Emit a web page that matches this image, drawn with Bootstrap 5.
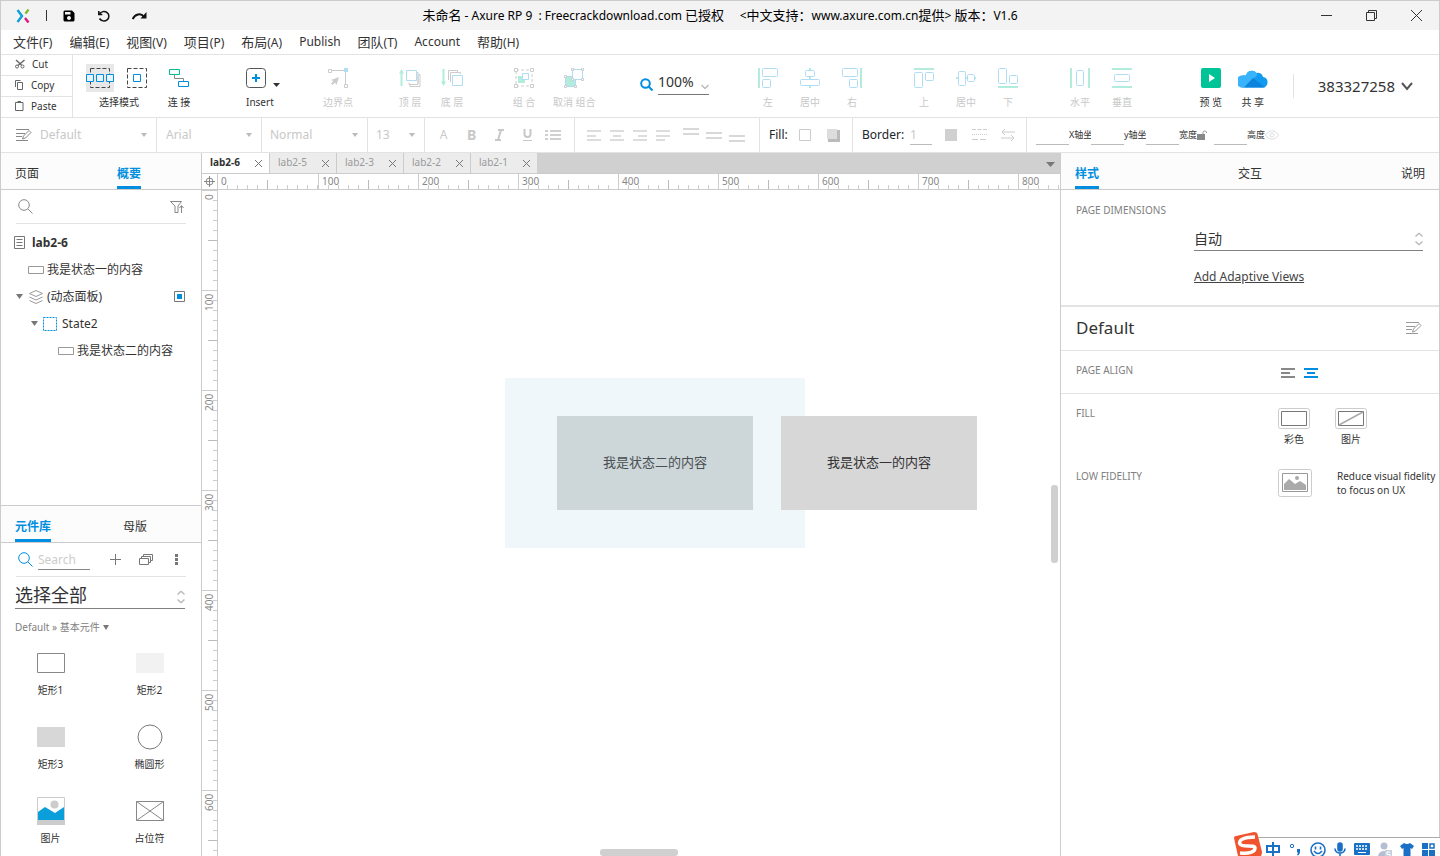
<!DOCTYPE html>
<html lang="zh-CN">
<head>
<meta charset="utf-8">
<meta name="viewport" content="width=device-width, initial-scale=1">
<title>未命名 - Axure RP 9</title>
<link href="https://cdn.jsdelivr.net/npm/bootstrap@5.3.0/dist/css/bootstrap.min.css" rel="stylesheet">
<style>
:root{--line:#e3e3e3;--edge:#ccc;--ink:#333;--blue:#008fe0;--sky:#b0dcf5;--mint:#b3ecdc}
body{font-family:"Noto Sans","Noto Sans CJK SC",sans-serif;font-size:12px;line-height:16px;color:var(--ink);fill:none}
button,input,select{font:inherit;color:inherit}
button{background:none;border:0;padding:0}
svg{display:block;flex:none}
.app{border:1px solid var(--edge);border-bottom:0}
.title-bar{background:#f3f3f3;height:29px;color:#000}
.title-text{white-space:pre;padding-bottom:2px}
.han{font-size:13px}
.menu-bar{height:25px;border-bottom:1px solid var(--line)}
.menu-bar a{color:var(--ink);text-decoration:none}
.tool-bar{height:63px;border-bottom:1px solid var(--line)}
.clip-col{width:72px;border-right:1px solid var(--line);font-size:10px}
.clip-col button{border-bottom:1px solid var(--line);padding-left:14px;padding-bottom:2px}
.clip-col svg{margin-right:7px}
.clip-col button:last-child{border:0}
.tool{width:42px;font-size:10px;line-height:14px;white-space:nowrap;flex:none}
.tool-art{height:28px;margin-bottom:3px}
.dim{color:#c8c8c8}
.group{margin-left:30px}
.format-bar{height:35px;border-bottom:1px solid var(--line);display:grid;grid-template-columns:156px 105px 106px 57px 150px 185px 93px 174px 1fr;color:#c8c8c8}
.format-bar>*{border-right:1px solid var(--line);display:flex;align-items:center;position:relative;min-width:0}
.format-bar>*:last-child{border:0}
.flat-select{appearance:none;background:none;border:0;outline:0;width:100%;padding:0 8px}
.line-input{border:0;border-bottom:1px solid #bbb;background:none;outline:0;padding:0;width:33px;height:20px;border-radius:0}
.tiny{font-size:9px;color:var(--ink);white-space:nowrap;width:22px;overflow:hidden}
.side-left{width:201px;border-right:1px solid var(--edge)}
.side-right{width:379px;border-left:1px solid var(--edge)}
.tabs{height:37px;background:#fcfcfc;border-bottom:1px solid var(--edge)}
.tabs button{border-bottom:3px solid transparent;padding-top:8px}
.tabs .on{color:var(--blue);font-weight:700;border-color:var(--blue)}
.rule{margin:0 15px;border-bottom:1px solid var(--line)}
.tree button{height:27px;width:100%;display:flex;align-items:center}
.big-select{font-size:18px;line-height:24px;height:32px;border-bottom:1px solid #808080}
.shape{height:74px;font-size:10px;padding-top:4px}
.shape:nth-last-child(-n+2){height:63px}
.shape-art{height:28px;margin-bottom:5px}
.doc-tabs{height:21px;background:#d0d0d0;border-bottom:1px solid var(--edge);font-size:10px}
.doc-tab{width:67px;background:#ececec;border-right:1px solid var(--edge);color:#999;padding:0 7px 0 8px}
.doc-tab span{padding-bottom:2px}
.doc-tab.on{width:68px;background:#fff;color:var(--ink);font-weight:700}
.doc-tab:nth-child(5){width:66px;border:0}
.ruler-top{height:16px;border-bottom:1px solid var(--edge)}
.corner{width:16px;border-right:1px solid var(--edge)}
.ruler-side{width:16px;border-right:1px solid var(--edge)}
.mark-x,.mark-y{flex:none;font-size:10px;line-height:14px;color:#888}
.mark-x{width:100px;padding-left:3px;border-left:1px solid var(--edge);background:linear-gradient(#bbb,#bbb) 49px 100%/1px 9px no-repeat,repeating-linear-gradient(90deg,transparent 0 9px,#ccc 9px 10px) 0 100%/100% 4px no-repeat}
.mark-y{height:100px;padding-bottom:3px;writing-mode:vertical-rl;transform:rotate(180deg);display:flex;justify-content:flex-end;border-bottom:1px solid var(--edge);background:linear-gradient(#bbb,#bbb) 0 49px/9px 1px no-repeat,repeating-linear-gradient(0deg,transparent 0 9px,#ccc 9px 10px) 0 0/4px 100% no-repeat}
.stage div{position:absolute;display:flex;align-items:center;justify-content:center;font-size:13px;padding-bottom:2px}
.node-panel{left:287px;top:188px;width:300px;height:170px;background:#eff7fa}
.node-two{left:339px;top:226px;width:196px;height:94px;background:#cdd6d9;color:#4a5052}
.node-one{left:563px;top:226px;width:196px;height:94px;background:#d7d7d7}
.thumb-y{width:7px;height:78px;right:2px;top:295px;background:#d0d0d0;border-radius:3px}
.thumb-x{width:78px;height:7px;left:382px;bottom:0;background:#d0d0d0;border-radius:3px}
.cap{font-size:10px;color:#808080;width:202px;flex:none}
.size-box{margin-left:118px;margin-right:1px}
.ime{width:206px;height:24px}
.ime-line{border-top:1px solid #aaa;background:#fff;margin-top:5px;height:19px;padding-top:4px}
</style>
</head>
<body>
<div class="app d-flex flex-column vh-100 overflow-hidden bg-white">

<header class="title-bar d-flex align-items-center flex-shrink-0 position-relative">
  <div class="d-flex align-items-center" style="padding-left:15px">
    <svg width="14" height="14" viewBox="0 0 14 14" stroke-width="2.4"><path d="M1.500 1l4.500 6-4.500 6" stroke="#0e9fd8"/><path d="M12.500 .6l-3 4" stroke="#7bb928"/><path d="M9 9l3.500 4.500" stroke="#e5147d"/></svg>
    <svg class="ms-3" width="2" height="12" viewBox="0 0 2 12"><path d="M.5 0v11" stroke="#333"/></svg>
    <button style="margin-left:15px" aria-label="保存"><svg width="12" height="12" viewBox="0 0 12 12" fill="#000"><path fill-rule="evenodd" d="M1.500 .5h7.500l2.500 2.500v7.500l-1 1h-9l-1-1v-9zM2 2v2.500h5.500V2zM6 6a2 2 0 1 0 .01 0z"/></svg></button>
    <button style="margin-left:23px" aria-label="撤销"><svg width="12" height="12" viewBox="0 0 12 12" stroke="#111" stroke-width="1.500"><path d="M.8 1v3.500h3.500M1.500 4A5 4.700 0 1 1 1.500 8.500"/></svg></button>
    <button style="margin-left:22px" aria-label="重做"><svg width="15" height="10" viewBox="0 0 15 10" stroke="#111" stroke-width="2"><path d="M.7 8C3 3 9 1.500 12 6"/><path d="M14.500 1v6.500H8.500z" fill="#111" stroke="none"/></svg></button>
  </div>
  <div class="title-text position-absolute start-50 top-50 translate-middle"><span class="han">未命名</span> - Axure RP 9  : Freecrackdownload.com <span class="han">已授权</span>     &lt;<span class="han">中文支持：</span>www.axure.com.cn<span class="han">提供</span>&gt; <span class="han">版本：</span>V1.6</div>
  <div class="d-flex align-items-center ms-auto" style="gap:34px;padding-right:17px">
    <button aria-label="最小化"><svg width="11" height="11" viewBox="0 0 11 11" stroke="#333"><path d="M0 5.500h11"/></svg></button>
    <button aria-label="还原"><svg width="11" height="11" viewBox="0 0 11 11" stroke="#333"><path d="M.5 2.500h8v8h-8zM2.500 2.500v-2h8v8h-2"/></svg></button>
    <button aria-label="关闭"><svg width="11" height="11" viewBox="0 0 11 11" stroke="#333"><path d="M0 0l11 11M11 0L0 11"/></svg></button>
  </div>
</header>

<nav class="menu-bar d-flex align-items-center flex-shrink-0 text-nowrap" style="gap:17px;padding-left:12px">
  <a href="#"><span class="han">文件</span>(F)</a><a href="#"><span class="han">编辑</span>(E)</a><a href="#"><span class="han">视图</span>(V)</a><a href="#"><span class="han">项目</span>(P)</a><a href="#"><span class="han">布局</span>(A)</a><a href="#">Publish</a><a href="#"><span class="han">团队</span>(T)</a><a href="#">Account</a><a href="#"><span class="han">帮助</span>(H)</a>
</nav>

<div class="tool-bar d-flex flex-shrink-0 align-items-center">
  <div class="clip-col d-flex flex-column h-100 flex-shrink-0">
    <button class="d-flex align-items-center flex-fill"><svg width="10" height="10" viewBox="0 0 10 10" stroke="#666"><path d="M1 1l5.500 5M9.500 1L3 6.500" stroke-width="1.400"/><circle cx="2" cy="7.500" r="1.500"/><circle cx="7.500" cy="7.500" r="1.500"/></svg>Cut</button>
    <button class="d-flex align-items-center flex-fill"><svg width="9" height="10" viewBox="0 0 9 10" stroke="#666"><path d="M.5 7V.5h5M2.500 2.500h5v7h-5z"/></svg>Copy</button>
    <button class="d-flex align-items-center flex-fill"><svg width="9" height="10" viewBox="0 0 9 10" stroke="#666"><path d="M.5 1.500h7.500v8H.5z"/><path d="M2.500 1h3.500" stroke-width="2"/></svg>Paste</button>
  </div>

  <div class="tool text-center" style="width:74px;margin-left:9px">
    <div class="tool-art d-flex align-items-center" style="gap:13px;margin-left:4px">
      <button aria-label="相交选择" style="background:#e8e8e8"><svg width="28" height="28" viewBox="0 0 28 28"><path d="M4.500 4.500h19v19h-19z" stroke="#444" stroke-dasharray="4 2"/><path d="M.5 10.500h7v7h-7zM10.500 10.500h7v7h-7zM20.500 10.500h7v7h-7z" fill="#e8f2fa" stroke="#008fe0"/></svg></button>
      <button aria-label="包含选择"><svg width="20" height="20" viewBox="0 0 20 20"><path d="M.5.500h19v19H.5z" stroke="#444" stroke-dasharray="4 2"/><path d="M6.500 6.500h7v7h-7z" stroke="#008fe0"/></svg></button>
    </div>
    <span>选择模式</span>
  </div>
  <button class="tool text-center" style="margin-left:2px"><span class="tool-art d-flex align-items-center justify-content-center"><svg width="20" height="18" viewBox="0 0 20 18"><path d="M5.500 6v3.500H14.500V13" stroke="#888"/><path d="M.5.500h10v5H.5z" stroke="#00bf93"/><path d="M9.500 12.500h10v5h-10z" stroke="#008fe0"/></svg></span>连 接</button>
  <button class="tool text-start" style="margin-left:46px"><span class="tool-art d-flex align-items-center"><svg width="36" height="22" viewBox="0 0 36 22"><rect x=".5" y="1.500" width="19" height="19" rx="3" stroke="#555"/><path d="M10 7v8M6 11h8" stroke="#008fe0" stroke-width="2"/><path d="M27 16h7l-3.500 4z" fill="#333"/></svg></span>Insert</button>
  <button class="tool text-center dim" style="margin-left:29px"><span class="tool-art d-flex align-items-center justify-content-center"><svg width="20" height="20" viewBox="0 0 20 20"><path d="M3 2.500h13M17.500 4v13" stroke="#ccc"/><path d="M.5 1.500h3v3h-3zM16.500 16.500h3v3h-3z" stroke="#ccc" fill="#fff"/><path d="M16 0h4v4h-4z" fill="#b0dcf5"/><path d="M11 9l-8 3 2.500 1L3 15.500 4.500 17l2.500-2.500L8.500 17z" fill="#ccc"/></svg></span>边界点</button>
  <button class="tool text-center dim group"><span class="tool-art d-flex align-items-center justify-content-center"><svg width="22" height="18" viewBox="0 0 22 18"><path d="M10 13.500v2h9v-9M11 15.500v2h10V5.500h-2M17 3.500h2v11" stroke="#ccc"/><path d="M2.500 17V3" stroke="#b3ecdc" stroke-width="2"/><path d="M0 4.500L2.500 0 5 4.500z" fill="#b3ecdc"/><path d="M7.500 1.500h10v10h-10z" fill="#fff" stroke="#b0dcf5"/></svg></span>顶 层</button>
  <button class="tool text-center dim"><span class="tool-art d-flex align-items-center justify-content-center"><svg width="22" height="18" viewBox="0 0 22 18"><path d="M7.500 11V1.500h9V3M9.500 13V3.500h10V5" stroke="#ccc"/><path d="M2.500 0v15" stroke="#b3ecdc" stroke-width="2"/><path d="M0 12.500h5L2.500 17z" fill="#b3ecdc"/><path d="M11.500 6.500h10v10h-10z" fill="#fff" stroke="#b0dcf5"/></svg></span>底 层</button>
  <button class="tool text-center dim group"><span class="tool-art d-flex align-items-center justify-content-center"><svg width="20" height="20" viewBox="0 0 20 20"><path d="M2 2h16v16H2z" stroke="#ccc" stroke-dasharray="3 2"/><path d="M.5.500h3v3h-3zM16.500.500h3v3h-3zM.5 16.500h3v3h-3zM16.500 16.500h3v3h-3z" fill="#fff" stroke="#ccc"/><path d="M4 8h7v7H4z" fill="#b3ecdc"/><path d="M8.500 5.500h6v6h-6z" fill="#fff" stroke="#b0dcf5"/></svg></span>组 合</button>
  <button class="tool text-center dim" style="margin-left:8px"><span class="tool-art d-flex align-items-center justify-content-center"><svg width="20" height="20" viewBox="0 0 20 20"><path d="M1.500 8.500h10v10h-10z" fill="#b3ecdc" stroke="#b0dcf5"/><path d="M8.500 1.500h10v10h-10z" fill="#fff" stroke="#b0dcf5"/><path d="M7.500.500h2v2h-2zM17.500.500h2v2h-2zM17.500 10.500h2v2h-2zM7.500 10.500h2v2h-2zM.5 7.500h2v2h-2zM.5 17.500h2v2h-2zM10.500 17.500h2v2h-2z" fill="#fff" stroke="#ccc"/></svg></span>取消 组合</button>

  <div class="d-flex align-items-center flex-shrink-0" style="margin-left:45px;gap:5px;padding-bottom:3px">
    <svg width="13" height="13" viewBox="0 0 13 13" stroke="#008fe0" stroke-width="2"><circle cx="5.500" cy="5.500" r="4.300"/><path d="M8.500 8.500l4 4"/></svg>
    <div class="position-relative" style="width:51px;border-bottom:1px solid #777;padding-bottom:3px">
      <select class="flat-select px-0" style="font-size:14px" aria-label="缩放"><option>100%</option></select>
      <svg class="position-absolute end-0 bottom-0 mb-1" width="8" height="6" viewBox="0 0 8 6" stroke="#bbb" stroke-width="1.500"><path d="M.5 1L4 4.500 7.500 1"/></svg>
    </div>
  </div>

  <button class="tool text-center dim" style="margin-left:38px"><span class="tool-art d-flex align-items-center justify-content-center"><svg width="20" height="20" viewBox="0 0 20 20" stroke="#b0dcf5"><path d="M1 0v20" stroke="#b3ecdc" stroke-width="2"/><rect x="4.500" y=".5" width="15" height="8" rx="1"/><rect x="4.500" y="11.500" width="8" height="8" rx="1"/></svg></span>左</button>
  <button class="tool text-center dim"><span class="tool-art d-flex align-items-center justify-content-center"><svg width="20" height="20" viewBox="0 0 20 20" stroke="#b0dcf5"><path d="M10 0v20" stroke="#b3ecdc" stroke-width="2"/><rect x="5.500" y="2.500" width="9" height="6" rx="1" fill="#fff"/><rect x=".5" y="11.500" width="19" height="6" rx="1" fill="#fff"/></svg></span>居中</button>
  <button class="tool text-center dim"><span class="tool-art d-flex align-items-center justify-content-center"><svg width="20" height="20" viewBox="0 0 20 20" stroke="#b0dcf5"><path d="M19 0v20" stroke="#b3ecdc" stroke-width="2"/><rect x=".5" y=".5" width="15" height="8" rx="1"/><rect x="7.500" y="11.500" width="8" height="8" rx="1"/></svg></span>右</button>
  <button class="tool text-center dim group"><span class="tool-art d-flex align-items-center justify-content-center"><svg width="20" height="20" viewBox="0 0 20 20" stroke="#b0dcf5"><path d="M0 1h20" stroke="#b3ecdc" stroke-width="2"/><rect x=".5" y="4.500" width="8" height="15" rx="1"/><rect x="11.500" y="4.500" width="8" height="8" rx="1"/></svg></span>上</button>
  <button class="tool text-center dim"><span class="tool-art d-flex align-items-center justify-content-center"><svg width="20" height="20" viewBox="0 0 20 20" stroke="#b0dcf5"><path d="M0 10h20" stroke="#b3ecdc" stroke-width="2"/><rect x="2.500" y="3.500" width="7" height="14" rx="1" fill="#fff"/><rect x="11.500" y="6.500" width="7" height="7" rx="1" fill="#fff"/></svg></span>居中</button>
  <button class="tool text-center dim"><span class="tool-art d-flex align-items-center justify-content-center"><svg width="20" height="20" viewBox="0 0 20 20" stroke="#b0dcf5"><path d="M0 19h20" stroke="#b3ecdc" stroke-width="2"/><rect x=".5" y=".5" width="8" height="15" rx="1"/><rect x="11.500" y="7.500" width="8" height="8" rx="1"/></svg></span>下</button>
  <button class="tool text-center dim group"><span class="tool-art d-flex align-items-center justify-content-center"><svg width="20" height="20" viewBox="0 0 20 20" stroke="#b0dcf5"><path d="M1 0v20M19 0v20" stroke="#b3ecdc" stroke-width="2"/><rect x="6.500" y="2.500" width="7" height="15" rx="1"/></svg></span>水平</button>
  <button class="tool text-center dim"><span class="tool-art d-flex align-items-center justify-content-center"><svg width="20" height="20" viewBox="0 0 20 20" stroke="#b0dcf5"><path d="M0 1h20M0 19h20" stroke="#b3ecdc" stroke-width="2"/><rect x="2.500" y="6.500" width="15" height="7" rx="1"/></svg></span>垂直</button>

  <button class="tool text-center ms-auto"><span class="tool-art d-flex align-items-center justify-content-center"><svg width="20" height="20" viewBox="0 0 20 20"><rect width="20" height="20" rx="2" fill="#00c497"/><path d="M8 6l6 4-6 4z" fill="#fff"/></svg></span>预 览</button>
  <button class="tool text-center"><span class="tool-art d-flex align-items-center justify-content-center"><svg width="30" height="20" viewBox="0 0 30 20"><path d="M6 19.500A6 6 0 0 1 5 7.500h3A6 6 0 0 1 18.500 5a5 5 0 0 1 6.500 4 5.300 5.300 0 0 1 0 10.500z" fill="#119af0"/><path d="M6 19.500A6 6 0 0 1 3 7.500h5A6 6 0 0 1 18.500 5l1 2L8 18z" fill="#39b3fb"/><path d="M6 19.500l9-9.500 12 9.500z" fill="#0c83dd"/></svg></span>共 享</button>
  <div class="border-start" style="height:24px;margin-left:19px;width:25px"></div>
  <button class="d-flex align-items-center" style="font-size:15px;gap:6px;margin-right:26px">383327258<svg width="12" height="9" viewBox="0 0 12 9" stroke="#555" stroke-width="2"><path d="M1 1l5 6 5-6"/></svg></button>
</div>

<div class="format-bar flex-shrink-0">
  <div>
    <svg style="margin-left:15px" width="16" height="14" viewBox="0 0 16 14" stroke="#888"><path d="M0 1.500h13M0 5.500h9M0 8.500h6M0 12.500h12M6.500 11l1-3L13 2.500l2 2L9.500 10z"/></svg>
    <select class="flat-select" aria-label="样式"><option>Default</option></select><svg class="position-absolute end-0 me-2" width="8" height="4" viewBox="0 0 8 4" fill="#bbb"><path d="M1 0h6L4 4z"/></svg>
  </div>
  <div><select class="flat-select" style="padding-left:9px" aria-label="字体"><option>Arial</option></select><svg class="position-absolute end-0 me-2" width="8" height="4" viewBox="0 0 8 4" fill="#bbb"><path d="M1 0h6L4 4z"/></svg></div>
  <div><select class="flat-select" aria-label="字重"><option>Normal</option></select><svg class="position-absolute end-0 me-2" width="8" height="4" viewBox="0 0 8 4" fill="#bbb"><path d="M1 0h6L4 4z"/></svg></div>
  <div><select class="flat-select" aria-label="字号"><option>13</option></select><svg class="position-absolute end-0 me-2" width="8" height="4" viewBox="0 0 8 4" fill="#bbb"><path d="M1 0h6L4 4z"/></svg></div>
  <div style="padding-left:14px;gap:19px">
    <button aria-label="文字颜色" style="width:9px">A</button>
    <button class="fw-bold" aria-label="粗体" style="font-size:14px;width:9px">B</button>
    <button aria-label="斜体"><svg width="9" height="12" viewBox="0 0 9 12" stroke="#c8c8c8" stroke-width="2"><path d="M3 1h6M0 11h6M6 1L3 11"/></svg></button>
    <button aria-label="下划线"><svg width="9" height="12" viewBox="0 0 9 12" stroke="#c8c8c8" stroke-width="2"><path d="M1.500 0v5a3 3 0 0 0 6 0V0"/><path d="M0 11.500h9" stroke-width="1"/></svg></button>
    <button aria-label="项目符号" style="margin-left:-6px"><svg width="16" height="12" viewBox="0 0 16 12" stroke="#d0d0d0" stroke-width="2"><path d="M0 2h3M5 2h11M0 6h3M5 6h11M0 10h3M5 10h11"/></svg></button>
  </div>
  <div style="padding-left:12px;gap:9px">
    <button aria-label="左对齐"><svg width="14" height="11" viewBox="0 0 14 11" stroke="#ddd" stroke-width="2"><path d="M0 1h14M0 6h9M0 10h14"/></svg></button>
    <button aria-label="居中对齐"><svg width="14" height="11" viewBox="0 0 14 11" stroke="#ddd" stroke-width="2"><path d="M0 1h14M3 6h8M0 10h14"/></svg></button>
    <button aria-label="右对齐"><svg width="14" height="11" viewBox="0 0 14 11" stroke="#ddd" stroke-width="2"><path d="M0 1h14M5 6h9M0 10h14"/></svg></button>
    <button aria-label="两端对齐"><svg width="14" height="11" viewBox="0 0 14 11" stroke="#ddd" stroke-width="2"><path d="M0 1h14M0 6h14M0 10h9"/></svg></button>
    <button aria-label="顶部对齐" class="ms-1"><svg width="16" height="14" viewBox="0 0 16 14" stroke="#d8d8d8" stroke-width="2"><path d="M0 1h16M0 6h16"/></svg></button>
    <button aria-label="垂直居中" style="margin-left:-2px"><svg width="16" height="14" viewBox="0 0 16 14" stroke="#d8d8d8" stroke-width="2"><path d="M0 5h16M0 10h16"/></svg></button>
    <button aria-label="底部对齐" style="margin-left:-2px"><svg width="16" height="14" viewBox="0 0 16 14" stroke="#d8d8d8" stroke-width="2"><path d="M0 8h16M0 13h16"/></svg></button>
  </div>
  <div style="padding-left:9px"><span class="text-body">Fill:</span>
    <button class="ms-auto" aria-label="填充颜色"><svg width="12" height="12" viewBox="0 0 12 12"><path d="M.5.500h11v11H.5z" stroke="#ccc"/></svg></button>
    <button aria-label="阴影" style="margin:0 12px 0 16px"><svg width="13" height="13" viewBox="0 0 13 13"><path d="M1 1h12v12H1z" fill="#bbb"/><path d="M0 0h10v10H0z" fill="#ddd"/></svg></button>
  </div>
  <div style="padding-left:9px"><label class="text-body" for="bw">Border:</label>
    <input id="bw" class="line-input" style="width:22px;margin-left:6px" value="1">
    <button aria-label="边框颜色" style="margin-left:13px"><svg width="12" height="12" viewBox="0 0 12 12"><path d="M0 0h12v12H0z" fill="#d0d0d0"/></svg></button>
    <button aria-label="线型" style="margin-left:15px"><svg width="15" height="12" viewBox="0 0 15 12" stroke="#ccc"><path d="M0 .5h15" stroke-dasharray="4 1.500"/><path d="M0 5.500h15" stroke-dasharray="1 1"/><path d="M0 10.500h15" stroke-dasharray="6 2"/></svg></button>
    <button aria-label="箭头" style="margin-left:14px"><svg width="14" height="12" viewBox="0 0 14 12" stroke="#ccc"><path d="M4 0L1 3l3 3M1 3h13M10 6l3 3-3 3M13 9H0"/></svg></button>
  </div>
  <div style="padding-left:9px">
    <input class="line-input" id="px"><label class="tiny" for="px">X轴坐</label>
    <input class="line-input" id="py"><label class="tiny" for="py">y轴坐</label>
    <input class="line-input" id="pw"><label class="tiny" for="pw" style="width:18px">宽度</label>
    <svg width="10" height="12" viewBox="0 0 10 12"><path d="M0 5h8v6H0z" fill="#888"/><path d="M6 5V3a2 2 0 0 1 3.500 0v1" stroke="#999"/></svg>
    <input class="line-input" id="ph" style="margin-left:7px"><label class="tiny" for="ph" style="width:18px">高度</label>
    <svg width="14" height="10" viewBox="0 0 14 10" stroke="#ddd"><path d="M.5 5C4-.5 10-.5 13.500 5 10 10.500 4 10.500.5 5z"/><circle cx="7" cy="5" r="2"/></svg>
  </div>
</div>

<main class="d-flex flex-grow-1" style="min-height:0">

  <aside class="side-left d-flex flex-column flex-shrink-0">
    <div class="tabs d-flex justify-content-between flex-shrink-0" style="padding:0 60px 0 14px"><button>页面</button><button class="on">概要</button></div>
    <div class="rule d-flex align-items-center justify-content-between flex-shrink-0" style="height:34px;padding:0 2px">
      <svg width="15" height="15" viewBox="0 0 15 15" stroke="#888"><circle cx="6" cy="6" r="5.300"/><path d="M10 10l4.500 4.500"/></svg>
      <button aria-label="过滤"><svg width="14" height="12" viewBox="0 0 14 12" stroke="#888"><path d="M.5.500h11L8 5v6.500H5V5zM11.500 12V5M9.500 7l2-2.500 2 2.500"/></svg></button>
    </div>
    <div class="tree flex-grow-1 overflow-hidden" style="padding-top:5px">
      <button class="fw-bold" style="padding-left:13px;gap:7px"><svg width="11" height="13" viewBox="0 0 11 13" stroke="#777"><path d="M.5.500h10v12H.5zM2.500 3.500h6M2.500 6.500h6M2.500 9.500h6"/></svg>lab2-6</button>
      <button style="padding-left:27px;gap:3px"><svg width="16" height="8" viewBox="0 0 16 8"><path d="M.5.500h15v7H.5z" stroke="#999"/></svg>我是状态一的内容</button>
      <button style="padding-left:15px"><svg width="7" height="5" viewBox="0 0 7 5"><path d="M0 0h7L3.500 5z" fill="#777"/></svg><svg style="margin:0 4px 0 6px" width="14" height="14" viewBox="0 0 14 14" stroke="#999"><path d="M7 .5l6.500 3L7 6.500.5 3.500zM.5 7L7 10l6.500-3M.5 10.500l6.500 3 6.500-3"/></svg><span>(动态面板)</span><svg class="ms-auto" style="margin-right:16px" width="11" height="11" viewBox="0 0 11 11"><path d="M.5.500h10v10H.5z" stroke="#777"/><path d="M3 3h5v5H3z" fill="#008fe0"/></svg></button>
      <button style="padding-left:30px;gap:5px"><svg width="7" height="5" viewBox="0 0 7 5"><path d="M0 0h7L3.500 5z" fill="#777"/></svg><svg width="14" height="14" viewBox="0 0 14 14"><path d="M.5.500h13v13H.5z" stroke="#008fe0" stroke-dasharray="2 1"/></svg>State2</button>
      <button style="padding-left:57px;gap:3px"><svg width="16" height="8" viewBox="0 0 16 8"><path d="M.5.500h15v7H.5z" stroke="#999"/></svg>我是状态二的内容</button>
    </div>
    <section class="flex-shrink-0" style="border-top:1px solid var(--edge)">
      <div class="tabs d-flex justify-content-between" style="padding:0 54px 0 14px"><button class="on">元件库</button><button>母版</button></div>
      <div class="rule d-flex align-items-center" style="height:34px;padding-left:2px">
        <svg width="15" height="15" viewBox="0 0 15 15" stroke="#008fe0"><circle cx="6" cy="6" r="5.300"/><path d="M10 10l4.500 4.500"/></svg>
        <input class="line-input" style="width:52px;margin-left:5px;border-color:#888;color:#ccc" aria-label="搜索元件" value="Search">
        <button aria-label="添加" style="margin-left:20px"><svg width="11" height="11" viewBox="0 0 11 11" stroke="#777"><path d="M5.500 0v11M0 5.500h11"/></svg></button>
        <button aria-label="库" style="margin-left:18px"><svg width="14" height="11" viewBox="0 0 14 11" stroke="#777"><path d="M.5 4.500h9v6h-9zM2.500 4V2.500h9v6H10M4.500 2V.5h9v6H12"/></svg></button>
        <button class="ms-auto me-2" aria-label="更多"><svg width="3" height="11" viewBox="0 0 3 11" fill="#777"><path d="M0 0h3v3H0zM0 4h3v3H0zM0 8h3v3H0z"/></svg></button>
      </div>
      <div class="big-select position-relative" style="margin:0 16px 0 14px"><select class="flat-select px-0 h-100 pt-1" aria-label="元件库"><option>选择全部</option></select><svg class="position-absolute end-0 top-50 translate-middle-y mt-1" width="8" height="13" viewBox="0 0 8 13" stroke="#bbb" stroke-width="1.500"><path d="M.5 4L4 .8 7.500 4M.5 9L4 12.200 7.500 9"/></svg></div>
      <div class="d-flex align-items-center" style="height:36px;padding-left:14px;gap:3px;font-size:10px;color:#808080"><span>Default » 基本元件</span><svg width="6" height="5" viewBox="0 0 6 5"><path d="M0 0h6L3 5z" fill="#777"/></svg></div>
      <div class="row g-0" style="padding-right:2px">
        <div class="col-6 shape text-center"><div class="shape-art d-flex align-items-center justify-content-center"><svg width="28" height="20" viewBox="0 0 28 20"><path d="M.5.500h27v19H.5z" stroke="#888"/></svg></div>矩形1</div>
        <div class="col-6 shape text-center"><div class="shape-art d-flex align-items-center justify-content-center"><svg width="28" height="20" viewBox="0 0 28 20"><path d="M0 0h28v20H0z" fill="#f2f2f2"/></svg></div>矩形2</div>
        <div class="col-6 shape text-center"><div class="shape-art d-flex align-items-center justify-content-center"><svg width="28" height="20" viewBox="0 0 28 20"><path d="M0 0h28v20H0z" fill="#d7d7d7"/></svg></div>矩形3</div>
        <div class="col-6 shape text-center"><div class="shape-art d-flex align-items-center justify-content-center"><svg width="26" height="26" viewBox="0 0 26 26"><circle cx="13" cy="13" r="12" stroke="#777"/></svg></div>椭圆形</div>
        <div class="col-6 shape text-center"><div class="shape-art d-flex align-items-center justify-content-center"><svg width="28" height="28" viewBox="0 0 28 28"><path d="M.5.500h27v27H.5z" stroke="#ccc" fill="#fff"/><path d="M0 23h28v5H0z" fill="#ccc"/><circle cx="17.500" cy="7.500" r="4" fill="#ccc"/><path d="M1 15l7-5 10 6 9-6v13H1z" fill="#0a9edb"/></svg></div>图片</div>
        <div class="col-6 shape text-center"><div class="shape-art d-flex align-items-center justify-content-center"><svg width="28" height="20" viewBox="0 0 28 20" stroke="#888"><path d="M.5.500h27v19H.5zM.5.500l27 19M27.500.500l-27 19"/></svg></div>占位符</div>
      </div>
    </section>
  </aside>

  <section class="d-flex flex-column flex-grow-1" style="min-width:0">
    <div class="doc-tabs d-flex flex-shrink-0 align-items-stretch">
      <div class="doc-tab on d-flex align-items-center justify-content-between"><span>lab2-6</span><button aria-label="关闭"><svg width="7" height="7" viewBox="0 0 7 7" stroke="#777"><path d="M0 0l7 7M7 0L0 7"/></svg></button></div>
      <div class="doc-tab d-flex align-items-center justify-content-between"><span>lab2-5</span><button aria-label="关闭"><svg width="7" height="7" viewBox="0 0 7 7" stroke="#777"><path d="M0 0l7 7M7 0L0 7"/></svg></button></div>
      <div class="doc-tab d-flex align-items-center justify-content-between"><span>lab2-3</span><button aria-label="关闭"><svg width="7" height="7" viewBox="0 0 7 7" stroke="#777"><path d="M0 0l7 7M7 0L0 7"/></svg></button></div>
      <div class="doc-tab d-flex align-items-center justify-content-between"><span>lab2-2</span><button aria-label="关闭"><svg width="7" height="7" viewBox="0 0 7 7" stroke="#777"><path d="M0 0l7 7M7 0L0 7"/></svg></button></div>
      <div class="doc-tab d-flex align-items-center justify-content-between"><span>lab2-1</span><button aria-label="关闭"><svg width="7" height="7" viewBox="0 0 7 7" stroke="#777"><path d="M0 0l7 7M7 0L0 7"/></svg></button></div>
      <button class="ms-auto" aria-label="所有页面" style="padding:3px 5px 0 0"><svg width="9" height="5" viewBox="0 0 9 5"><path d="M0 0h9L4.500 5z" fill="#777"/></svg></button>
    </div>
    <div class="ruler-top d-flex flex-shrink-0 overflow-hidden">
      <div class="corner flex-shrink-0 d-flex align-items-center justify-content-center"><svg width="11" height="11" viewBox="0 0 11 11" stroke="#888"><circle cx="5.500" cy="5.500" r="3.500"/><path d="M5.500 0v11M0 5.500h11"/></svg></div>
      <div class="mark-x border-start-0">0</div><div class="mark-x">100</div><div class="mark-x">200</div><div class="mark-x">300</div><div class="mark-x">400</div><div class="mark-x">500</div><div class="mark-x">600</div><div class="mark-x">700</div><div class="mark-x">800</div>
    </div>
    <div class="d-flex flex-grow-1" style="min-height:0">
      <div class="ruler-side d-flex flex-column flex-shrink-0 overflow-hidden">
        <div class="mark-y">0</div><div class="mark-y">100</div><div class="mark-y">200</div><div class="mark-y">300</div><div class="mark-y">400</div><div class="mark-y">500</div><div class="mark-y">600</div>
      </div>
      <div class="stage position-relative flex-grow-1 overflow-hidden">
        <div class="node-panel"></div>
        <div class="node-two">我是状态二的内容</div>
        <div class="node-one">我是状态一的内容</div>
        <div class="thumb-y"></div><div class="thumb-x"></div>
      </div>
    </div>
  </section>

  <aside class="side-right flex-shrink-0">
    <div class="tabs d-flex justify-content-between" style="padding:0 14px"><button class="on">样式</button><button>交互</button><button>说明</button></div>
    <div style="height:117px;padding:12px 15px 0;border-bottom:2px solid var(--line)">
      <div class="cap">PAGE DIMENSIONS</div>
      <div class="size-box position-relative" style="margin-top:9px;height:24px;border-bottom:1px solid #808080"><select class="flat-select px-0 h-100" style="font-size:14px" aria-label="页面尺寸"><option>自动</option></select><svg class="position-absolute end-0 top-50 translate-middle-y" width="8" height="13" viewBox="0 0 8 13" stroke="#bbb" stroke-width="1.500"><path d="M.5 4L4 .8 7.500 4M.5 9L4 12.200 7.500 9"/></svg></div>
      <a href="#" class="size-box d-inline-block" style="color:#444;margin-top:18px">Add Adaptive Views</a>
    </div>
    <div class="d-flex align-items-center justify-content-between" style="height:44px;padding:0 17px 2px 15px;border-bottom:1px solid var(--line)"><span style="font-size:17px">Default</span><button aria-label="编辑样式"><svg width="16" height="14" viewBox="0 0 16 14" stroke="#999"><path d="M0 1.500h13M0 5.500h9M0 8.500h6M0 12.500h12M6.500 11l1-3L13 2.500l2 2L9.500 10z"/></svg></button></div>
    <div class="d-flex align-items-center" style="height:43px;padding:2px 0 0 15px;border-bottom:1px solid var(--line)"><span class="cap" style="padding-bottom:6px">PAGE ALIGN</span>
      <button style="margin:0 9px 0 3px" aria-label="左对齐"><svg width="14" height="10" viewBox="0 0 14 10" stroke="#888" stroke-width="2"><path d="M0 1h14M0 5h9M0 9h14"/></svg></button>
      <button aria-label="居中"><svg width="14" height="10" viewBox="0 0 14 10" stroke="#008fe0" stroke-width="2"><path d="M0 1h14M3 5h8M0 9h14"/></svg></button></div>
    <div class="d-flex" style="padding:14px 0 0 15px;height:75px"><span class="cap" style="margin-top:-3px">FILL</span>
      <button class="text-center align-self-start" style="width:32px;font-size:10px;margin-right:25px"><svg width="32" height="21" viewBox="0 0 32 21"><rect x=".5" y=".5" width="31" height="20" rx="2" stroke="#ccc"/><path d="M3.500 3.500h25v14h-25z" stroke="#777"/></svg><span class="d-block" style="margin-top:2px">彩色</span></button>
      <button class="text-center align-self-start" style="width:32px;font-size:10px"><svg width="32" height="21" viewBox="0 0 32 21"><rect x=".5" y=".5" width="31" height="20" rx="2" stroke="#ccc"/><path d="M3.500 3.500h25v14h-25z" stroke="#777"/><path d="M4 17L28 4" stroke="#aaa" stroke-width="1.500"/></svg><span class="d-block" style="margin-top:2px">图片</span></button></div>
    <div class="d-flex" style="padding-left:15px;font-size:10px;line-height:14px"><span class="cap">LOW FIDELITY</span>
      <button aria-label="低保真" style="margin-right:25px"><svg width="34" height="28" viewBox="0 0 34 28"><rect x=".5" y=".5" width="33" height="27" rx="2" stroke="#ccc"/><path d="M4.500 4.500h25v18h-25z" stroke="#999"/><path d="M6 21v-6l5-5 6 5 5-3 6 4v5z" fill="#aaa"/><circle cx="19" cy="9" r="2" fill="#aaa"/></svg></button>
      <span class="text-nowrap">Reduce visual fidelity<br>to focus on UX</span></div>
  </aside>
</main>
</div>

<div class="ime position-fixed bottom-0 end-0 overflow-hidden">
  <div class="ime-line position-absolute end-0 top-0 d-flex align-items-start justify-content-end" style="width:186px;gap:8px;padding-right:5px">
    <svg width="14" height="15" viewBox="0 0 14 15" stroke="#1a70c5" stroke-width="2"><path d="M1 4h12v6H1zM7 0v15"/></svg>
    <svg width="14" height="14" viewBox="0 0 14 14"><circle cx="4" cy="4" r="1.700" stroke="#1a70c5"/><path d="M9 7h3v3q0 2-2 3.500L9 13l1.200-2.500H9z" fill="#1a70c5"/></svg>
    <svg width="16" height="16" viewBox="0 0 16 16" stroke="#1a70c5" stroke-width="1.600"><circle cx="8" cy="8" r="7"/><path d="M5.500 4.500v3M10.500 4.500v3M4 9q4 5 8 0"/></svg>
    <svg width="12" height="16" viewBox="0 0 12 16" stroke="#1a70c5" stroke-width="1.600"><rect x="4" y="1" width="4" height="8" rx="2" fill="#1a70c5"/><path d="M1 6.500c0 6 10 6 10 0M6 11v4M3 15h6"/></svg>
    <svg width="16" height="14" viewBox="0 0 16 14"><rect y="1" width="16" height="12" rx="1" fill="#1a70c5"/><path d="M2 4h12M2 7h12" stroke="#fff" stroke-width="1.500" stroke-dasharray="2 1"/><path d="M4 10.500h8" stroke="#fff"/></svg>
    <svg width="14" height="16" viewBox="0 0 14 16" fill="#b5bfd3"><circle cx="6" cy="4" r="3.500"/><path d="M0 15c0-8 12-8 12 0z"/><path d="M7 8h7v8H7z" fill="#c9d1e0"/><path d="M12 10H9v2.500h3V15H9" fill="none" stroke="#fff"/></svg>
    <svg width="14" height="14" viewBox="0 0 14 14" fill="#1a70c5"><path d="M4 1q3 2 6 0l4 3-2 3-1.500-1v8h-7V6L2 7 0 4z"/></svg>
    <svg width="13" height="14" viewBox="0 0 13 14" fill="#1a70c5"><path d="M0 1h6v6H0zM0 8h6v6H0zM7 8h6v6H7z"/><path d="M8 2h4v4H8z" fill="none" stroke="#1a70c5" stroke-width="1.500"/></svg>
  </div>
  <svg class="position-relative" width="29" height="24" viewBox="0 0 29 24"><path d="M0 6Q0 4 2 4L20 0q3 0 3.500 2L28 20q0 2-1 4H4z" fill="#f0532d"/><path d="M21 5C10 5 4 8 6 12s15 0 15 4-6 6-15 5" stroke="#fff" stroke-width="3.500"/></svg>
</div>
<script src="https://cdn.jsdelivr.net/npm/bootstrap@5.3.0/dist/js/bootstrap.bundle.min.js"></script>
</body>
</html>
